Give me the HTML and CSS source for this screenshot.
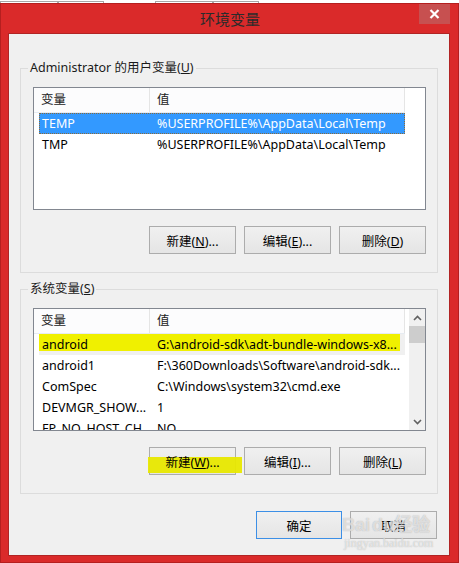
FILE: index.html
```html
<!DOCTYPE html>
<html lang="zh-CN">

<head>
    <meta charset="UTF-8">
    <title>环境变量</title>
    <link rel="stylesheet" href="styles.css">
</head>

<body>

    <!-- Tabs of the window behind -->
    <div class="behind">
        <div class="tab tab-a"></div>
        <div class="tab tab-b"></div>
        <div class="tab-gap"></div>
        <div class="tab tab-a"></div>
        <div class="tab tab-b"></div>
    </div>

    <div class="window">
        <div class="titlebar">
            <div></div>
            <div class="title">环境变量</div>
            <div class="close-btn">
                <svg width="11" height="10" viewBox="0 0 11 10">
                    <path d="M1.5 1 L9.5 9 M9.5 1 L1.5 9" stroke="#fff" stroke-width="2.2" fill="none" />
                </svg>
            </div>
        </div>

        <div class="client">

            <!-- User variables -->
            <fieldset class="group">
                <legend>Administrator 的用户变量(<u>U</u>)</legend>
                <div class="list">
                    <div class="list-body">
                        <div class="list-head">
                            <div class="head-cell">变量</div>
                            <div class="head-cell">值</div>
                        </div>
                        <div class="row selected">
                            <span class="name">TEMP</span>
                            <span class="value">%USERPROFILE%\AppData\Local\Temp</span>
                        </div>
                        <div class="row">
                            <span class="name">TMP</span>
                            <span class="value">%USERPROFILE%\AppData\Local\Temp</span>
                        </div>
                    </div>
                </div>
                <div class="btn-row">
                    <button class="btn">新建(<u>N</u>)...</button>
                    <button class="btn">编辑(<u>E</u>)...</button>
                    <button class="btn">删除(<u>D</u>)</button>
                </div>
            </fieldset>

            <!-- System variables -->
            <fieldset class="group second">
                <legend>系统变量(<u>S</u>)</legend>
                <div class="list">
                    <div class="list-body">
                        <div class="list-head">
                            <div class="head-cell">变量</div>
                            <div class="head-cell">值</div>
                        </div>
                        <div class="row inactive marked">
                            <span class="name">android</span>
                            <span class="value">G:\android-sdk\adt-bundle-windows-x8...</span>
                        </div>
                        <div class="row">
                            <span class="name">android1</span>
                            <span class="value">F:\360Downloads\Software\android-sdk...</span>
                        </div>
                        <div class="row">
                            <span class="name">ComSpec</span>
                            <span class="value">C:\Windows\system32\cmd.exe</span>
                        </div>
                        <div class="row">
                            <span class="name">DEVMGR_SHOW...</span>
                            <span class="value">1</span>
                        </div>
                        <div class="row">
                            <span class="name">FP_NO_HOST_CH...</span>
                            <span class="value">NO</span>
                        </div>
                    </div>
                    <div class="scrollbar">
                        <div class="arrow">
                            <svg width="9" height="6" viewBox="0 0 9 6">
                                <path d="M1 5 L4.5 1.5 L8 5" stroke="#606060" stroke-width="1.6" fill="none" />
                            </svg>
                        </div>
                        <div class="thumb"></div>
                        <div class="track"></div>
                        <div class="arrow">
                            <svg width="9" height="6" viewBox="0 0 9 6">
                                <path d="M1 1 L4.5 4.5 L8 1" stroke="#606060" stroke-width="1.6" fill="none" />
                            </svg>
                        </div>
                    </div>
                </div>
                <div class="btn-row">
                    <button class="btn marked-btn"><span>新建(<u>W</u>)...</span></button>
                    <button class="btn">编辑(<u>I</u>)...</button>
                    <button class="btn">删除(<u>L</u>)</button>
                </div>
            </fieldset>

            <div class="dialog-buttons">
                <button class="btn default">确定</button>
                <button class="btn">取消</button>
            </div>
        </div>

        <!-- Watermark -->
        <div class="watermark">
            <div class="wm-logo">Bai<span class="paw">du</span>经验</div>
            <div class="wm-url">jingyan.baidu.com</div>
        </div>
    </div>

</body>

</html>
```

FILE: styles.css
```css
/* General */
body {
    margin: 0;
    padding: 0;
    background: #fff;
    font-family: "Noto Sans", "Noto Sans CJK SC", sans-serif;
    font-size: 12.5px;
    color: #000;
    width: 459px;
    height: 563px;
    overflow: hidden;
}

/* Strip of the window behind */
.behind {
    height: 3px;
    display: flex;
    background: #fff;
}

.tab {
    margin-top: 1px;
    height: 2px;
    border: 1px solid #a8a8a8;
    border-bottom: none;
    box-sizing: border-box;
}

.tab-a {
    width: 58px;
}

.tab-b {
    width: 46px;
}

.tab-gap {
    width: 51px;
}

/* Window frame */
.window {
    position: relative;
    height: 560px;
    background: #da2a2a;
    border: 1px solid #b51f1f;
    box-sizing: border-box;
    display: flex;
    flex-direction: column;
}

.titlebar {
    height: 29px;
    display: grid;
    grid-template-columns: 1fr auto 1fr;
}

.title {
    align-self: center;
    font-family: "Noto Sans CJK SC", sans-serif;
    font-size: 15px;
    color: #2b2b2b;
    line-height: 20px;
    padding-left: 1px;
}

.close-btn {
    justify-self: end;
    width: 31px;
    height: 20px;
    margin-right: 8px;
    background: #c75050;
    display: flex;
    align-items: center;
    justify-content: center;
}

.client {
    flex: 1;
    margin: 0 8px 6px 7px;
    background: #f0f0f0;
    border: 1px solid #b12424;
    display: flex;
    flex-direction: column;
}

/* Group boxes */
.group {
    margin: 26px 11px 0 11px;
    padding: 0 11px 18px 12px;
    border: 1px solid #dcdcdc;
    min-width: 0;
}

.group.second {
    margin-top: 8px;
}

.group legend {
    margin-left: -5px;
    padding: 0 2px;
    line-height: 16px;
    color: #1a1a1a;
}

/* List views */
.list {
    margin-top: 11px;
    height: 123px;
    box-sizing: border-box;
    border: 1px solid #828790;
    background: #fff;
    display: flex;
    overflow: hidden;
}

.list-body {
    flex: 1;
}

.list-head {
    width: 371px;
    height: 25px;
    box-sizing: border-box;
    border-bottom: 1px solid #e7ecf2;
    background: #fcfcfd;
    display: grid;
    grid-template-columns: 116px 255px;
}

.head-cell {
    padding-left: 7px;
    line-height: 24px;
    border-right: 1px solid #e5e5e5;
    color: #222;
}

.row {
    position: relative;
    margin-left: 5px;
    width: 366px;
    height: 21px;
    box-sizing: border-box;
    display: grid;
    grid-template-columns: 111px 255px;
    line-height: 21px;
    white-space: nowrap;
    overflow: hidden;
}

.row span {
    position: relative;
    overflow: hidden;
}

.row .name {
    padding-left: 3px;
}

.row .value {
    padding-left: 7px;
}

.row.selected {
    background: #3399ff;
    color: #fff;
    border: 1px dotted #8a6a3a;
    line-height: 19px;
}

.row.selected .name {
    padding-left: 2px;
}

.row.selected .value {
    padding-left: 6px;
}

.row.inactive {
    background: #f0f0f0;
}

/* Yellow marker drawn over the screenshot */
.row.marked::before {
    content: "";
    position: absolute;
    left: -4px;
    top: 0;
    width: 365px;
    height: 17px;
    background: #f0f000;
}

.scrollbar {
    width: 16px;
    margin-left: 2px;
    background: #f0f0f0;
    display: flex;
    flex-direction: column;
}

.arrow {
    height: 17px;
    display: flex;
    align-items: center;
    justify-content: center;
}

.thumb {
    height: 17px;
    background: #cdcdcd;
}

.track {
    flex: 1;
}

/* Buttons */
.btn-row {
    margin-top: 16px;
    display: flex;
    justify-content: flex-end;
    gap: 8px;
}

.btn {
    width: 87px;
    height: 28px;
    padding: 0;
    margin: 0;
    border: 1px solid #acacac;
    background: linear-gradient(#f0f0f0, #e5e5e5);
    font-family: "Noto Sans", "Noto Sans CJK SC", sans-serif;
    font-size: 12.5px;
    color: #000;
}

.btn.default {
    width: 86px;
    border-color: #3c8fe6;
}

.marked-btn {
    position: relative;
}

.marked-btn::before {
    content: "";
    position: absolute;
    left: -2px;
    top: 9px;
    width: 94px;
    height: 16px;
    background: rgba(232, 232, 0, 0.95);
}

.marked-btn span {
    position: relative;
}

.dialog-buttons {
    margin: 17px 12px 0 0;
    display: flex;
    justify-content: flex-end;
    gap: 8px;
}

/* Watermark */
.watermark {
    position: absolute;
    left: 341px;
    top: 510px;
    color: rgba(255, 255, 255, 0.6);
    text-shadow: 0 0 1px rgba(120, 120, 120, 0.6);
    pointer-events: none;
}

.wm-logo {
    font-family: "Liberation Sans", sans-serif;
    font-size: 18px;
    font-weight: bold;
    line-height: 22px;
}

.wm-logo .paw {
    margin-left: 2px;
}

.wm-url {
    font-family: "Liberation Serif", serif;
    font-size: 12px;
    line-height: 14px;
    margin-left: 2px;
}
```
